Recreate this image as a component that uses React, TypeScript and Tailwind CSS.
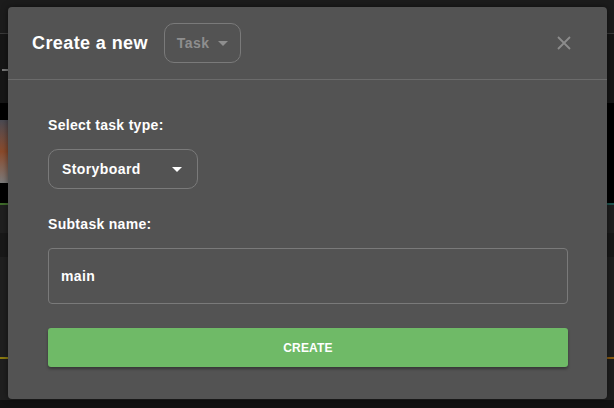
import { useState } from 'react';

function Caret({ className }: { className: string }) {
    return (
        <svg width="10" height="5" viewBox="0 0 10 5" className={className}>
            <path d="M0 0 L10 0 L5 5 Z" fill="currentColor" />
        </svg>
    );
}

function Backdrop() {
    return (
        <div className="flex flex-col w-full h-[408px] bg-[#1b1b1b]">
            <div className="h-[34px] border-b border-[#3a3a3a] bg-[#1c1c1c]"></div>
            <div className="h-[69px] bg-[#161616] relative">
                <div className="absolute left-[2px] top-[35px] w-[6px] h-[2px] bg-[#777]"></div>
            </div>
            <div className="h-[100px] flex bg-black">
                <div className="w-[8px] h-full flex flex-col">
                    <div className="h-[17px]"></div>
                    <div className="h-[63px] bg-gradient-to-b from-[#4a4a52] via-[#8a4a2a] to-[#7a7a7a]"></div>
                </div>
            </div>
            <div className="h-[2px] flex">
                <div className="w-[8px] bg-[#3f6b2a]"></div>
                <div className="flex-1"></div>
                <div className="w-[9px] bg-[#1f5550]"></div>
            </div>
            <div className="h-[28px] bg-[#1f1f1f]"></div>
            <div className="h-[24px] bg-[#181818]"></div>
            <div className="h-[100px] bg-[#1f1f1f]"></div>
            <div className="h-[2px] flex">
                <div className="w-[8px] bg-[#8a7a10]"></div>
                <div className="flex-1"></div>
                <div className="w-[9px] bg-[#8a5a10]"></div>
            </div>
            <div className="h-[41px] bg-[#1f1f1f]"></div>
            <div className="flex-1 bg-[#111]"></div>
        </div>
    );
}

export default function App() {
    const [name, setName] = useState('main');

    return (
        <div className="relative w-[614px] h-[408px] overflow-hidden font-['Liberation_Sans',Arial,sans-serif]">
            <Backdrop />
            <div className="absolute left-[8px] top-[7px] w-[599px] h-[392px] bg-[#535353] rounded-[4px] shadow-[0_0_6px_rgba(0,0,0,0.5)] flex flex-col">
                <div className="h-[73px] border-b border-[#6b6b6b] flex items-center pl-[24px] pr-[36px]">
                    <h2 className="text-[18px] font-bold text-white tracking-[0.4px]">Create a new</h2>
                    <button className="ml-[16px] h-[40px] w-[77px] border border-[#7a7a7a] rounded-[10px] flex items-center pl-[12px] gap-[9px] text-[#8e8e8e] text-[14px] font-bold tracking-[0.4px]">
                        Task
                        <Caret className="text-[#8e8e8e]" />
                    </button>
                    <button className="ml-auto text-[#8c8c8c]">
                        <svg width="14" height="14" viewBox="0 0 14 14">
                            <path d="M1 1 L13 13 M13 1 L1 13" stroke="currentColor" strokeWidth="1.8" />
                        </svg>
                    </button>
                </div>
                <div className="flex flex-col pl-[40px] pr-[39px] pt-[35px]">
                    <label className="text-[14px] font-bold text-white tracking-[0.3px]">Select task type:</label>
                    <button className="mt-[13px] h-[40px] w-[150px] border border-[#7a7a7a] rounded-[10px] flex items-center justify-between pl-[13px] pr-[15px] text-white text-[14px] font-bold tracking-[0.4px]">
                        Storyboard
                        <Caret className="text-white" />
                    </button>
                    <label className="mt-[25px] text-[14px] font-bold text-white tracking-[0.3px]">Subtask name:</label>
                    <input
                        className="mt-[13px] h-[56px] w-full border border-[#7a7a7a] rounded-[4px] bg-transparent px-[12px] text-white text-[14px] font-bold tracking-[0.4px] focus:outline-none"
                        value={name}
                        onChange={(e) => setName(e.target.value)}
                    />
                    <button className="mt-[24px] h-[39px] w-full rounded-[3px] bg-[#6fba67] text-white text-[12px] font-bold tracking-[0.2px] shadow-[0_2px_3px_rgba(0,0,0,0.35)]">
                        CREATE
                    </button>
                </div>
            </div>
        </div>
    );
}
